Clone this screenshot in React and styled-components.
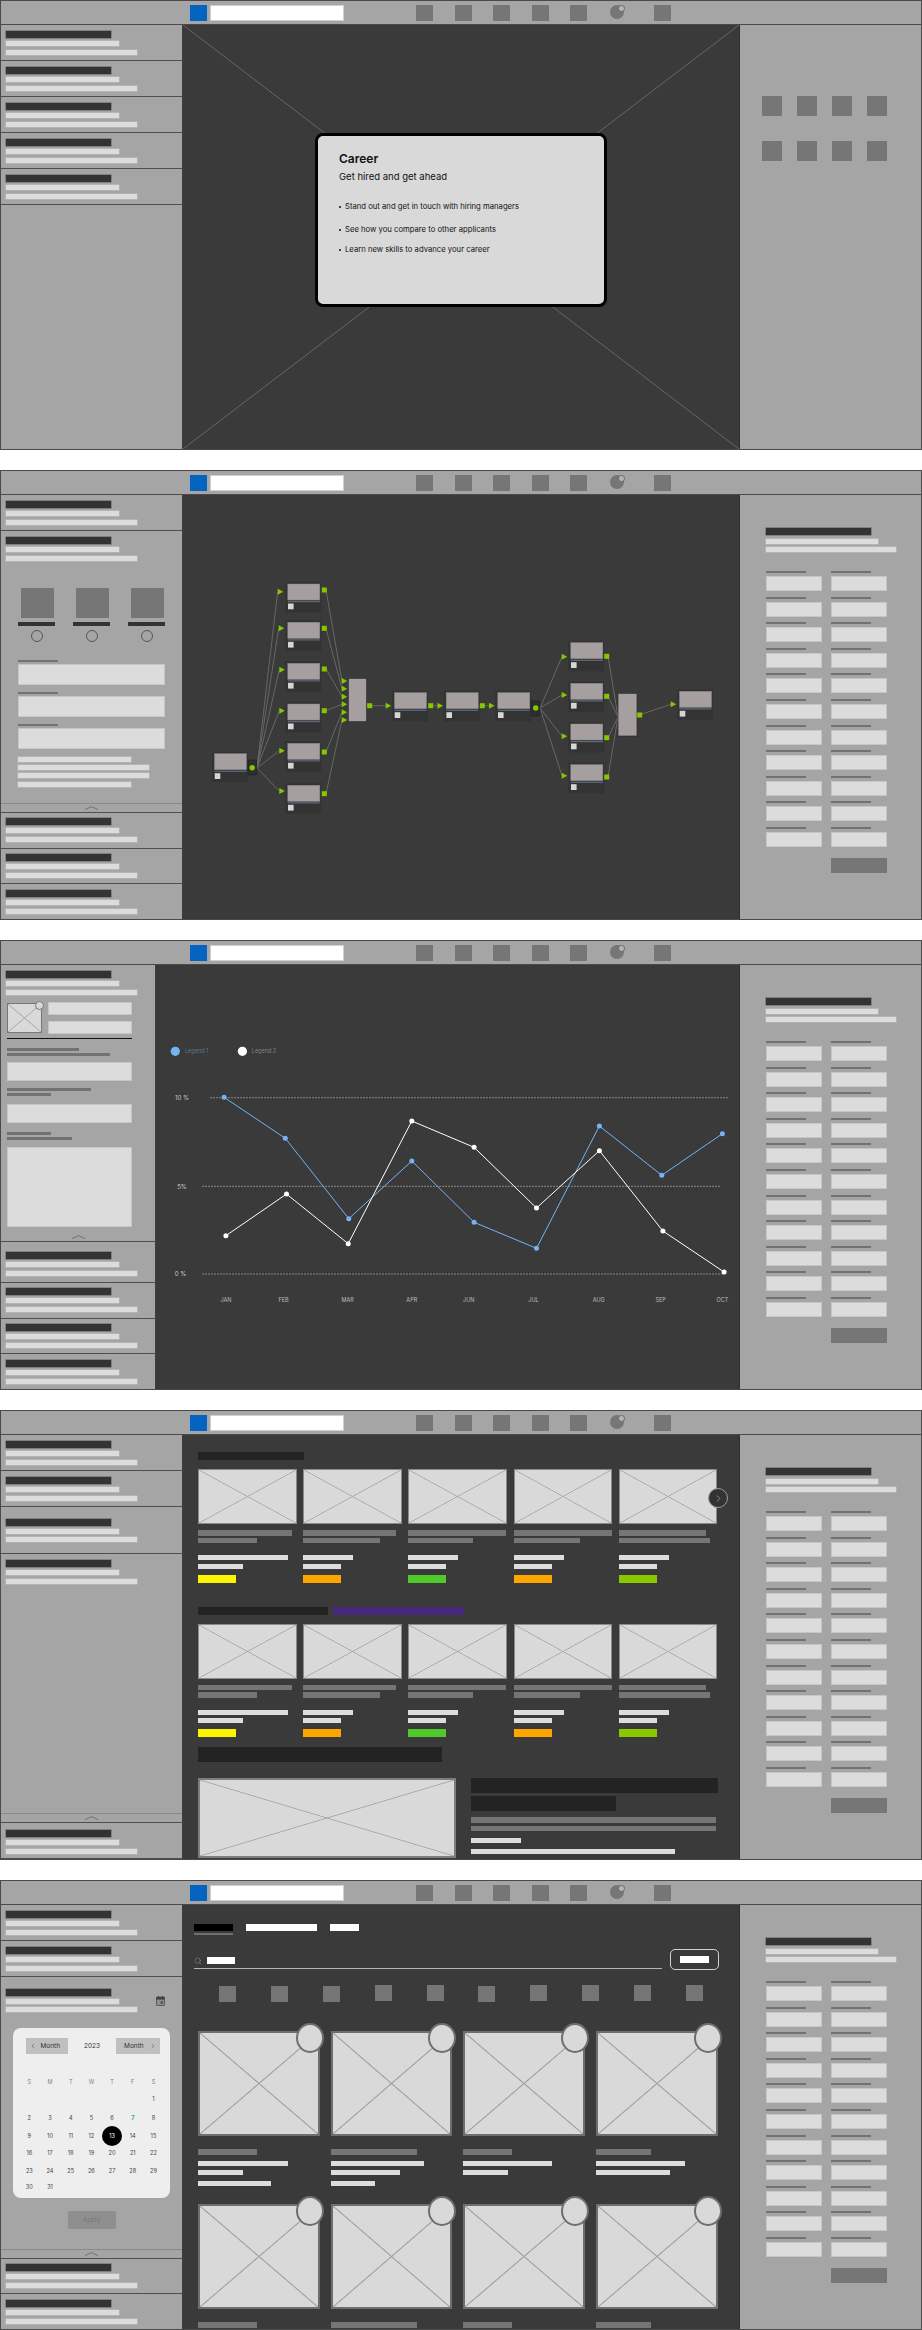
import React from 'react';
import styled, { createGlobalStyle, css } from 'styled-components';
import { ChevronLeft, ChevronRight, Search } from 'lucide-react';

const GlobalStyle = createGlobalStyle`
  html, body {
    margin: 0;
    padding: 0;
    background: #ffffff;
    font-family: 'Inter', 'Liberation Sans', sans-serif;
  }
  * { box-sizing: border-box; }
`;

const crossLines = (color, size = 0.6) => css`
  background-image:
    linear-gradient(to top right, transparent calc(50% - ${size}px), ${color} 50%, transparent calc(50% + ${size}px)),
    linear-gradient(to bottom right, transparent calc(50% - ${size}px), ${color} 50%, transparent calc(50% + ${size}px));
`;

const Frame = styled.section`
  height: 450px;
  width: 922px;
  margin-bottom: 20px;
  border: 1px solid #4a4a4a;
  overflow: hidden;
  background: #a5a5a5;
  &:last-child { margin-bottom: 0; }
`;

const Header = styled.header`
  height: 24px;
  display: flex;
  align-items: flex-start;
  padding: 4px 0 0 189px;
  border-bottom: 1px solid #4a4a4a;
`;

const Logo = styled.div`
  width: 17px;
  height: 16px;
  background: #0563c1;
  margin-right: 3px;
`;

const SearchInput = styled.div`
  width: 134px;
  height: 16px;
  background: #ffffff;
  border: 1px solid #d0d0d0;
  margin-right: 72px;
`;

const NavIcon = styled.div`
  width: 17px;
  height: 16px;
  background: #767676;
  margin-right: ${(p) => p.$gap ?? 21.5}px;
`;

const NavBubble = styled.div`
  position: relative;
  width: 14px;
  height: 14px;
  border-radius: 50%;
  background: #767676;
  margin-right: 29.5px;
  &::after {
    content: '';
    position: absolute;
    top: 0;
    right: -0.5px;
    width: 4.5px;
    height: 4.5px;
    border-radius: 50%;
    background: #b5b5b5;
    border: 0.8px solid #6a6a6a;
  }
`;

const Body = styled.div`
  display: flex;
  height: 424px;
`;

const Sidebar = styled.aside`
  width: ${(p) => p.$w ?? 182}px;
  flex-shrink: 0;
  height: 100%;
  overflow: hidden;
  border-right: 1px solid #3d3d3d;
  display: flex;
  flex-direction: column;
`;

const Main = styled.main`
  flex: 1;
  min-width: 0;
  height: 100%;
  overflow: hidden;
  background-color: #3a3a3a;
  padding-left: ${(p) => p.$pad ?? 0}px;
`;

const CrossMain = styled(Main)`
  ${crossLines('#6b6b6b', 0.7)}
  display: flex;
  justify-content: center;
  align-items: flex-start;
  padding-top: 108px;
`;

const Panel = styled.aside`
  width: 182px;
  flex-shrink: 0;
  height: 100%;
  border-left: 1px solid #2e2e2e;
  padding: 33px 0 0 26px;
`;

const TitleBar = styled.div`
  width: ${(p) => p.$w ?? 105}px;
  height: 7px;
  background: #333333;
  box-shadow: 0 0 0 0.5px #5c5c5c;
`;

const LightBar = styled.div`
  width: ${(p) => p.$w}px;
  height: 5px;
  margin-top: ${(p) => p.$mt ?? 0}px;
  background: #dcdcdc;
  box-shadow: 0 0 0 0.5px #c4c4c4;
`;

const SideItem = styled.div`
  flex-shrink: 0;
  height: ${(p) => p.$h ?? 36}px;
  padding: ${(p) => p.$top ?? 6}px 5px 0;
  border-bottom: 1px solid #4f4f4f;
  display: flex;
  flex-direction: column;
`;

const CollapseBar = styled.div`
  margin: auto -5px 0;
  height: 9px;
  flex-shrink: 0;
  display: flex;
  justify-content: center;
  align-items: center;
  border-top: ${(p) => (p.$plain ? 'none' : '1px solid #8a8a8a')};
`;

const Chevron = () => (
  <svg width="13" height="4" viewBox="0 0 13 4">
    <polyline points="0,3.6 6.5,0.6 13,3.6" fill="none" stroke="#666666" strokeWidth="0.8" />
  </svg>
);

const ItemHead = ({ gap = 4 }) => (
  <>
    <TitleBar />
    <LightBar $w={113} $mt={3} />
    <LightBar $w={130.5} $mt={gap} />
  </>
);

const Item = ({ top, h, gap }) => (
  <SideItem $top={top} $h={h}>
    <ItemHead gap={gap} />
  </SideItem>
);

const FormLabel = styled.div`
  width: ${(p) => p.$w ?? 40}px;
  height: ${(p) => p.$h ?? 2}px;
  margin-top: ${(p) => p.$mt ?? 0}px;
  background: #727272;
`;

const FieldBox = styled.div`
  width: ${(p) => p.$w}px;
  height: ${(p) => p.$h}px;
  margin-top: ${(p) => p.$mt ?? 0}px;
  background: #dcdcdc;
  border: 1px solid #c6c6c6;
`;

const FieldGrid = styled.div`
  margin-top: 19px;
  display: grid;
  grid-template-columns: 56px 56px;
  column-gap: 9px;
  row-gap: 5.6px;
`;

const SubmitBox = styled.div`
  grid-column: 2;
  width: 56px;
  height: 15px;
  margin-top: 5.4px;
  background: #767676;
`;

const RightForm = () => (
  <Panel>
    <TitleBar />
    <LightBar $w={112} $mt={4} />
    <LightBar $w={130} $mt={3} />
    <FieldGrid>
      {Array.from({ length: 22 }).map((_, i) => (
        <div key={i}>
          <FormLabel />
          <FieldBox $w={56} $h={15} $mt={3} />
        </div>
      ))}
      <SubmitBox />
    </FieldGrid>
  </Panel>
);

const TopBar = () => (
  <Header>
    <Logo />
    <SearchInput />
    <NavIcon />
    <NavIcon />
    <NavIcon />
    <NavIcon />
    <NavIcon $gap={23} />
    <NavBubble />
    <NavIcon />
  </Header>
);

/* frame 1 */
const Modal = styled.div`
  width: 292px;
  height: 174px;
  padding: 15px 21px 0;
  background: #d9d9d9;
  border: 3px solid #000000;
  border-radius: 8px;
  color: #111111;
`;

const ModalTitle = styled.h2`
  margin: 0;
  font-size: 12px;
  line-height: 16px;
  font-weight: 600;
`;

const ModalSub = styled.p`
  margin: 3px 0 0;
  font-size: 9.5px;
  line-height: 14px;
`;

const ModalList = styled.ul`
  list-style: none;
  margin: 0;
  padding: 0;
`;

const ModalPoint = styled.li`
  position: relative;
  margin-top: ${(p) => p.$mt}px;
  padding-left: 6px;
  font-size: 7.7px;
  line-height: 10px;
  white-space: nowrap;
  &::before {
    content: '';
    position: absolute;
    left: 0;
    top: 4px;
    width: 2px;
    height: 2px;
    border-radius: 50%;
    background: #111111;
  }
`;

const SquareGrid = styled.div`
  display: grid;
  grid-template-columns: repeat(4, 20px);
  column-gap: 15px;
  row-gap: 25px;
  margin: 38px 0 0 -4px;
`;

const Square = styled.div`
  height: 20px;
  background: #767676;
`;

/* frame 2 */
const OptionRow = styled.div`
  margin: 27px 0 0 12px;
  display: grid;
  grid-template-columns: repeat(3, 37px);
  column-gap: 18px;
`;

const Option = styled.div`
  display: flex;
  flex-direction: column;
  align-items: center;
`;

const OptionImage = styled.div`
  width: 33px;
  height: 30px;
  margin-left: 1px;
  background: #767676;
`;

const OptionName = styled.div`
  width: 37px;
  height: 4px;
  margin-top: 4px;
  background: #333333;
`;

const Radio = styled.div`
  width: 12px;
  height: 12px;
  margin-top: 4px;
  border-radius: 50%;
  border: 1px solid #555555;
`;

const IndentBlock = styled.div`
  margin-left: 12px;
`;

const nodesA = [582, 620.3, 661.3, 702, 741.3, 783.3];
const nodesB = [640.7, 681.3, 722, 762.7];

const Node = ({ x, y }) => (
  <g>
    <rect x={x} y={y} width="36" height="30.5" rx="1.5" fill="#333333" />
    <rect x={x + 2.5} y={y + 2} width="32" height="16" fill="#a5a09f" stroke="#8a8685" strokeWidth="0.5" />
    <rect x={x + 2.5} y={y + 19} width="32" height="1.2" fill="#5e6b7d" />
    <rect x={x + 2.7} y={y + 21.5} width="5.6" height="5.8" fill="#d6d6d6" />
  </g>
);

const Port = ({ x, y }) => <rect x={x - 2.5} y={y - 2.5} width="5" height="5" fill="#86c800" />;
const Arrow = ({ x, y }) => <polygon points={`${x},${y - 3} ${x + 5.5},${y} ${x},${y + 3}`} fill="#86c800" />;

const Splitter = ({ x, y, cx, cy }) => (
  <g>
    <rect x={x} y={y} width="8.6" height="15" rx="1" fill="#2e2e2e" stroke="#1e1e1e" strokeWidth="0.6" />
    <circle cx={cx} cy={cy} r="2.7" fill="#86c800" />
  </g>
);

const Link = ({ a, b }) => <line x1={a[0]} y1={a[1]} x2={b[0]} y2={b[1]} stroke="#6c6c6c" strokeWidth="0.9" />;

const arrowsA = [[277.7, 591.7], [278.7, 628.3], [279.3, 669.7], [279.3, 710.7], [279.3, 750.7], [279.3, 791]];
const portsA = [590, 628.3, 669, 710.7, 752, 793.7];
const mergeIn = [681, 688.7, 696.7, 704.3, 712.3, 720];
const arrowsB = [656.7, 695, 736.3, 775.7];
const portsB = [656.3, 696.3, 737.7, 777];

const Graph = () => (
  <svg width="555" height="424" viewBox="183 495 555 424" style={{ display: 'block' }}>
    {arrowsA.map(([x, y]) => <Link key={y} a={[257, 768]} b={[x, y]} />)}
    {portsA.map((y, i) => <Link key={y} a={[326, y]} b={[342, mergeIn[i]]} />)}
    {arrowsB.map((y) => <Link key={y} a={[540, 708]} b={[562, y]} />)}
    {portsB.map((y) => <Link key={y} a={[608, y]} b={[618, 717]} />)}
    <Link a={[372, 705.7]} b={[386, 705.7]} />
    <Link a={[433, 705.7]} b={[438, 705.7]} />
    <Link a={[485, 705.7]} b={[489, 705.7]} />
    <Link a={[642, 714]} b={[671, 704.3]} />
    <Node x={212} y={751.7} />
    <Splitter x={248} y={760} cx={252.2} cy={767.7} />
    {nodesA.map((y) => <Node key={y} x={285.3} y={y} />)}
    {arrowsA.map(([x, y]) => <Arrow key={y} x={x} y={y} />)}
    {portsA.map((y) => <Port key={y} x={324.3} y={y} />)}
    {mergeIn.map((y) => <Arrow key={y} x={341.7} y={y} />)}
    <rect x="348.3" y="678.3" width="18.4" height="43.4" fill="#a5a09f" stroke="#2a2a2a" strokeWidth="0.7" />
    <Port x={369.7} y={705.7} />
    <Arrow x={385.7} y={705.7} />
    <Node x={392} y={690.7} />
    <Port x={430.7} y={705.7} />
    <Arrow x={437.5} y={705.7} />
    <Node x={443.7} y={690.7} />
    <Port x={482.3} y={705.7} />
    <Arrow x={489} y={705.7} />
    <Node x={495.3} y={690.7} />
    <Splitter x={531.3} y={701} cx={535.7} cy={708} />
    {nodesB.map((y) => <Node key={y} x={568.3} y={y} />)}
    {arrowsB.map((y) => <Arrow key={y} x={561.7} y={y} />)}
    {portsB.map((y) => <Port key={y} x={606.7} y={y} />)}
    <rect x="618" y="693.3" width="19" height="42.7" fill="#a5a09f" stroke="#2a2a2a" strokeWidth="0.7" />
    <Port x={639.7} y={715} />
    <Arrow x={670.7} y={704.3} />
    <Node x={677} y={689.3} />
  </svg>
);

/* frame 3 */
const ProfileRow = styled.div`
  margin: 7px 0 0 1px;
  display: flex;
  gap: 6px;
`;

const Thumb = styled.div`
  position: relative;
  flex-shrink: 0;
  width: ${(p) => p.$w ?? '100%'};
  height: ${(p) => p.$h}px;
  margin-top: ${(p) => p.$mt ?? 0}px;
  background-color: #d9d9d9;
  border: ${(p) => p.$border ?? 1}px solid ${(p) => p.$edge ?? '#777777'};
  ${(p) => crossLines(p.$line ?? '#a3a3a3', p.$stroke ?? 0.7)}
`;

const ProfileBubble = styled.div`
  position: absolute;
  top: -3px;
  right: -3px;
  width: 9px;
  height: 9px;
  border-radius: 50%;
  background: #d9d9d9;
  border: 1px solid #777777;
`;

const ProfileFields = styled.div`
  display: flex;
  flex-direction: column;
  gap: 6px;
`;

const Rule = styled.div`
  width: 125px;
  height: 1px;
  margin: 4px 0 0 1px;
  background: #111111;
`;

const Indent = styled.div`
  margin-left: ${(p) => p.$x ?? 1}px;
`;

const blue = [[224.1, 1097.3], [285.3, 1138.3], [348.8, 1218.7], [411.8, 1161], [474.1, 1222.3], [536.5, 1248.3], [599.4, 1126], [661.8, 1175.3], [722.4, 1133.7]];
const white = [[225.9, 1235.7], [286.5, 1194], [348.2, 1243.7], [411.8, 1121], [474.1, 1147.3], [536.5, 1208], [599.4, 1150.7], [662.9, 1231], [724.1, 1272]];
const months = [['JAN', 226], ['FEB', 283.5], ['MAR', 347.6], ['APR', 411.8], ['JUN', 468.8], ['JUL', 533.5], ['AUG', 598.8], ['SEP', 660.6], ['OCT', 722.4]];
const gridLines = [['10 %', 182, 1097.7, 210, 729], ['5%', 182, 1186.3, 202, 720], ['0 %', 180.5, 1274, 202, 725]];

const ChartText = styled.text`
  font-family: 'Inter', 'Liberation Sans', sans-serif;
  font-size: ${(p) => p.$size ?? 6}px;
  fill: ${(p) => p.$fill ?? '#bdbdbd'};
  text-anchor: ${(p) => p.$anchor ?? 'middle'};
`;

const Series = ({ points, color }) => (
  <g>
    <polyline points={points.map((p) => p.join(',')).join(' ')} fill="none" stroke={color} strokeWidth="1" />
    {points.map(([x, y]) => <circle key={x} cx={x} cy={y} r="2.5" fill={color} />)}
  </g>
);

const Chart = () => (
  <svg width="583" height="424" viewBox="156 965 583 424" style={{ display: 'block' }}>
    <circle cx="175.3" cy="1051.3" r="4.6" fill="#74b4f5" />
    <ChartText x="185" y="1052.5" $size={5.5} $anchor="start" $fill="#5f7488">Legend 1</ChartText>
    <circle cx="242.4" cy="1051.3" r="4.6" fill="#ffffff" />
    <ChartText x="251.8" y="1052.5" $size={5.5} $anchor="start" $fill="#808080">Legend 2</ChartText>
    {gridLines.map(([label, tx, y, x1, x2]) => (
      <g key={label}>
        <line x1={x1} x2={x2} y1={y} y2={y} stroke="#9c9c9c" strokeWidth="0.8" strokeDasharray="2 1" />
        <ChartText x={tx} y={y + 2.2} $fill="#cfcfcf">{label}</ChartText>
      </g>
    ))}
    <Series points={blue} color="#74b4f5" />
    <Series points={white} color="#ffffff" />
    {months.map(([m, x]) => <ChartText key={m} x={x} y="1301.5" $size={5.5}>{m}</ChartText>)}
  </svg>
);

/* frame 4 */
const HeadingRow = styled.div`
  display: flex;
  gap: 5px;
  margin-top: ${(p) => p.$mt}px;
`;

const Heading = styled.div`
  width: ${(p) => p.$w}px;
  height: ${(p) => p.$h ?? 8}px;
  margin-top: ${(p) => p.$mt ?? 0}px;
  background: ${(p) => p.$color ?? '#232323'};
`;

const ProductGrid = styled.div`
  position: relative;
  margin-top: 9px;
  display: grid;
  grid-template-columns: repeat(5, 98.5px);
  column-gap: 6.7px;
`;

const GreyBar = styled.div`
  width: ${(p) => p.$w}px;
  height: ${(p) => p.$h ?? 5.5}px;
  margin-top: ${(p) => p.$mt}px;
  background: #757575;
`;

const WhiteBar = styled.div`
  width: ${(p) => p.$w}px;
  height: 5px;
  margin-top: ${(p) => p.$mt}px;
  background: #dddddd;
`;

const Tag = styled.div`
  width: 38px;
  height: 8px;
  margin-top: 6px;
  background: ${(p) => p.$color};
`;

const NextButton = styled.div`
  position: absolute;
  left: 510px;
  top: 19px;
  width: 20px;
  height: 20px;
  display: flex;
  align-items: center;
  justify-content: center;
  border-radius: 50%;
  background: #333333;
  border: 1px solid #9a9a9a;
  color: #d0d0d0;
`;

const Feature = styled.div`
  margin-top: 16px;
  display: grid;
  grid-template-columns: 258px 247px;
  column-gap: 15px;
`;

const products = [
  { g1: 94, g2: 59, w1: 90, w2: 45, tag: '#fdf500' },
  { g1: 93, g2: 77, w1: 50, w2: 38, tag: '#ffa500' },
  { g1: 98, g2: 65, w1: 50, w2: 38, tag: '#52c92a' },
  { g1: 98, g2: 66, w1: 50, w2: 38, tag: '#ffa500' },
  { g1: 87, g2: 91, w1: 50, w2: 38, tag: '#88c800' },
];

const Products = ({ next }) => (
  <ProductGrid>
    {products.map((p, i) => (
      <div key={i}>
        <Thumb $h={55} $edge="#8a8a8a" />
        <GreyBar $w={p.g1} $mt={6} />
        <GreyBar $w={p.g2} $mt={2} />
        <WhiteBar $w={p.w1} $mt={12} />
        <WhiteBar $w={p.w2} $mt={3.5} />
        <Tag $color={p.tag} />
      </div>
    ))}
    {next && (
      <NextButton>
        <ChevronRight size={11} strokeWidth={1.2} />
      </NextButton>
    )}
  </ProductGrid>
);

/* frame 5 */
const HeadWithIcon = styled.div`
  display: flex;
  justify-content: space-between;
  align-items: center;
  padding-right: 12px;
`;

const CalendarCard = styled.div`
  width: 156.5px;
  height: 170px;
  margin: 16px 0 0 7.3px;
  padding: 10px 9.7px 0 12.7px;
  flex-shrink: 0;
  background: #eeeeee;
  border-radius: 8px;
  color: #333333;
`;

const CalendarHead = styled.div`
  display: flex;
  align-items: center;
  justify-content: space-between;
`;

const MonthButton = styled.div`
  width: ${(p) => p.$w}px;
  height: 15.5px;
  display: flex;
  align-items: center;
  justify-content: space-between;
  padding: 0 3px;
  background: #bfbfbf;
  font-size: 6.5px;
`;

const Year = styled.span`
  font-size: 6.5px;
`;

const DayGrid = styled.div`
  margin: 19.5px 0 0 -7px;
  display: grid;
  grid-template-columns: repeat(7, 20.7px);
  grid-template-rows: 17px 18.4px 20.2px 15.2px 19.4px 16px 15.2px;
`;

const Day = styled.div`
  justify-self: center;
  align-self: center;
  width: 20px;
  height: 20px;
  margin: -5px 0;
  display: flex;
  align-items: center;
  justify-content: center;
  border-radius: 50%;
  font-size: 5.6px;
  color: ${(p) => (p.$head ? '#808080' : p.$teal ? '#25b29b' : '#444444')};
  font-weight: ${(p) => (p.$teal ? 700 : 400)};
  ${(p) => p.$selected && 'background: #000000; color: #ffffff;'}
`;

const ApplyButton = styled.div`
  align-self: center;
  width: 48px;
  height: 18px;
  margin-top: 13px;
  flex-shrink: 0;
  display: flex;
  align-items: center;
  justify-content: center;
  background: #8f8f8f;
  color: #777777;
  font-size: 6.5px;
`;

const Tabs = styled.div`
  height: 11px;
  margin-top: 19px;
  display: flex;
  gap: 12.8px;
`;

const Tab = styled.div`
  position: relative;
  width: ${(p) => p.$w}px;
  height: 7px;
  background: ${(p) => (p.$active ? '#000000' : '#ffffff')};
  ${(p) =>
    p.$active &&
    `&::after {
      content: '';
      position: absolute;
      left: 0;
      right: 0;
      top: 8.5px;
      height: 2px;
      background: #6e6e6e;
    }`}
`;

const SearchRow = styled.div`
  margin-top: 14px;
  display: flex;
  align-items: flex-start;
`;

const SearchField = styled.div`
  width: 467.5px;
  height: 20px;
  padding-top: 8px;
  display: flex;
  align-items: flex-start;
  gap: 5px;
  color: #a8a8a8;
  border-bottom: 1px solid #b5b5b5;
`;

const SearchChip = styled.div`
  width: ${(p) => p.$w}px;
  height: 7px;
  background: #ffffff;
`;

const OutlineButton = styled.div`
  width: 49px;
  height: 21px;
  margin-left: 8.6px;
  display: flex;
  align-items: center;
  justify-content: center;
  border: 1px solid #d0d0d0;
  border-radius: 5px;
`;

const IconRow = styled.div`
  margin: 16px 0 0 25px;
  display: grid;
  grid-template-columns: repeat(10, 17px);
  column-gap: 34.9px;
  height: 16px;
`;

const RowIcon = styled.div`
  height: 16px;
  margin-top: ${(p) => (p.$up ? -1 : 0)}px;
  background: #757575;
`;

const GalleryGrid = styled.div`
  margin: 29.3px 0 0 4px;
  display: grid;
  grid-template-columns: repeat(4, 121.5px);
  column-gap: 11.2px;
  grid-auto-rows: 172.7px;
`;

const FavBubble = styled.div`
  position: absolute;
  top: -10px;
  right: -6px;
  width: 28px;
  height: 30px;
  border-radius: 50%;
  background: #d9d9d9;
  border: 2px solid #6e6e6e;
`;

const gallery = [
  { g: 59, w1: 90, w2: 45, w3: 73 },
  { g: 86, w1: 93, w2: 69, w3: 44 },
  { g: 49, w1: 88.5, w2: 44.5 },
  { g: 55, w1: 88.5, w2: 74 },
];

const monthDays = [
  ['', '', '', '', '', '', '1'],
  ['2', '3', '4', '5', '6', '7', '8'],
  ['9', '10', '11', '12', '13', '14', '15'],
  ['16', '17', '18', '19', '20', '21', '22'],
  ['23', '24', '25', '26', '27', '28', '29'],
  ['30', '31', '', '', '', '', ''],
];

const DatePicker = () => (
  <CalendarCard>
    <CalendarHead>
      <MonthButton $w={42}>
        <ChevronLeft size={8} strokeWidth={1.2} />
        <span style={{ marginRight: 5 }}>Month</span>
      </MonthButton>
      <Year>2023</Year>
      <MonthButton $w={44}>
        <span style={{ marginLeft: 5 }}>Month</span>
        <ChevronRight size={8} strokeWidth={1.2} />
      </MonthButton>
    </CalendarHead>
    <DayGrid>
      {['S', 'M', 'T', 'W', 'T', 'F', 'S'].map((d, i) => <Day key={i} $head>{d}</Day>)}
      {monthDays.flat().map((d, i) => (
        <Day key={`d${i}`} $teal={d === '7'} $selected={d === '13'}>{d}</Day>
      ))}
    </DayGrid>
  </CalendarCard>
);

const CalendarIcon = () => (
  <svg width="9" height="10" viewBox="0 0 9 10">
    <rect x="0.4" y="1" width="8.2" height="8.6" rx="0.8" fill="#8f8f8f" stroke="#444444" strokeWidth="0.8" />
    <rect x="0.4" y="1" width="8.2" height="2.6" fill="#444444" />
    <rect x="2" y="0" width="1" height="1.6" fill="#444444" />
    <rect x="6" y="0" width="1" height="1.6" fill="#444444" />
    <rect x="4.6" y="5.4" width="2.2" height="2.2" fill="#444444" />
  </svg>
);

export default function App() {
  return (
    <>
      <GlobalStyle />

      <Frame>
        <TopBar />
        <Body>
          <Sidebar>
            <Item />
            <Item />
            <Item />
            <Item />
            <Item />
          </Sidebar>
          <CrossMain>
            <Modal>
              <ModalTitle>Career</ModalTitle>
              <ModalSub>Get hired and get ahead</ModalSub>
              <ModalList>
                <ModalPoint $mt={18}>Stand out and get in touch with hiring managers</ModalPoint>
                <ModalPoint $mt={13}>See how you compare to other applicants</ModalPoint>
                <ModalPoint $mt={10}>Learn new skills to advance your career</ModalPoint>
              </ModalList>
            </Modal>
          </CrossMain>
          <Panel>
            <SquareGrid>
              {Array.from({ length: 8 }).map((_, i) => <Square key={i} />)}
            </SquareGrid>
          </Panel>
        </Body>
      </Frame>

      <Frame>
        <TopBar />
        <Body>
          <Sidebar>
            <Item />
            <SideItem $h={282}>
              <ItemHead />
              <OptionRow>
                {[0, 1, 2].map((i) => (
                  <Option key={i}>
                    <OptionImage />
                    <OptionName />
                    <Radio />
                  </Option>
                ))}
              </OptionRow>
              <IndentBlock>
                <FormLabel $mt={18} />
                <FieldBox $w={147} $h={21} $mt={2} />
                <FormLabel $mt={7} />
                <FieldBox $w={147} $h={21} $mt={2} />
                <FormLabel $mt={7} />
                <FieldBox $w={147} $h={21} $mt={2} />
                <LightBar $w={113} $mt={8} />
                <LightBar $w={131} $mt={3} />
                <LightBar $w={131} $mt={3} />
                <LightBar $w={113} $mt={4} />
              </IndentBlock>
              <CollapseBar><Chevron /></CollapseBar>
            </SideItem>
            <Item top={5} />
            <Item top={5} h={35} />
            <Item />
          </Sidebar>
          <Main><Graph /></Main>
          <RightForm />
        </Body>
      </Frame>

      <Frame>
        <TopBar />
        <Body>
          <Sidebar $w={155}>
            <SideItem $h={277}>
              <ItemHead />
              <ProfileRow>
                <Thumb $w="34.7px" $h={30} $mt={1}>
                  <ProfileBubble />
                </Thumb>
                <ProfileFields>
                  <FieldBox $w={84} $h={13} />
                  <FieldBox $w={84} $h={13} />
                </ProfileFields>
              </ProfileRow>
              <Rule />
              <Indent>
                <FormLabel $w={72} $h={3} $mt={9} />
                <FormLabel $w={103} $h={3} $mt={2} />
                <FieldBox $w={125} $h={19} $mt={6} />
                <FormLabel $w={84} $h={3} $mt={7} />
                <FormLabel $w={44} $h={3} $mt={2} />
                <FieldBox $w={125} $h={19} $mt={8} />
                <FormLabel $w={44} $h={3} $mt={9} />
                <FormLabel $w={65} $h={3} $mt={2} />
                <FieldBox $w={125} $h={80} $mt={7} />
              </Indent>
              <CollapseBar $plain><Chevron /></CollapseBar>
            </SideItem>
            <Item top={10} h={41} />
            <Item top={5} />
            <Item top={5} h={35} />
            <Item />
          </Sidebar>
          <Main><Chart /></Main>
          <RightForm />
        </Body>
      </Frame>

      <Frame>
        <TopBar />
        <Body>
          <Sidebar>
            <Item />
            <Item />
            <Item top={12} h={47} gap={3} />
            <SideItem $h={269}>
              <ItemHead />
              <CollapseBar><Chevron /></CollapseBar>
            </SideItem>
            <Item top={7} />
          </Sidebar>
          <Main $pad={15}>
            <HeadingRow $mt={17}>
              <Heading $w={106} />
            </HeadingRow>
            <Products next />
            <HeadingRow $mt={24}>
              <Heading $w={130} />
              <Heading $w={131} $color="#482878" />
            </HeadingRow>
            <Products />
            <Heading $w={244} $h={15} $mt={10} />
            <Feature>
              <Thumb $h={80} $border={2} $edge="#7e7e7e" $line="#a3a3a3" $stroke={0.8} />
              <div>
                <Heading $w={247} $h={15} />
                <Heading $w={145} $h={15} $mt={3} />
                <GreyBar $w={245} $mt={6} />
                <GreyBar $w={245} $mt={3} />
                <WhiteBar $w={50} $mt={7} />
                <WhiteBar $w={204} $mt={6} />
              </div>
            </Feature>
          </Main>
          <RightForm />
        </Body>
      </Frame>

      <Frame>
        <TopBar />
        <Body>
          <Sidebar>
            <Item />
            <Item />
            <SideItem $top={12} $h={282}>
              <HeadWithIcon>
                <div><ItemHead gap={3} /></div>
                <CalendarIcon />
              </HeadWithIcon>
              <DatePicker />
              <ApplyButton>Apply</ApplyButton>
              <CollapseBar><Chevron /></CollapseBar>
            </SideItem>
            <Item top={5} h={35} />
            <Item />
          </Sidebar>
          <Main $pad={11}>
            <Tabs>
              <Tab $w={39} $active />
              <Tab $w={71.6} />
              <Tab $w={28.4} />
            </Tabs>
            <SearchRow>
              <SearchField>
                <Search size={8} strokeWidth={1.2} />
                <SearchChip $w={28.4} />
              </SearchField>
              <OutlineButton>
                <SearchChip $w={28.4} />
              </OutlineButton>
            </SearchRow>
            <IconRow>
              {[0, 0, 0, 1, 1, 0, 1, 1, 1, 1].map((up, i) => <RowIcon key={i} $up={up} />)}
            </IconRow>
            <GalleryGrid>
              {[...gallery, ...gallery].map((c, i) => (
                <div key={i}>
                  <Thumb $h={105} $border={2} $edge="#6e6e6e" $line="#9a9a9a" $stroke={1} >
                    <FavBubble />
                  </Thumb>
                  <GreyBar $w={c.g} $h={6} $mt={13} />
                  <WhiteBar $w={c.w1} $mt={6} />
                  <WhiteBar $w={c.w2} $mt={3.5} />
                  {c.w3 && <WhiteBar $w={c.w3} $mt={6} />}
                </div>
              ))}
            </GalleryGrid>
          </Main>
          <RightForm />
        </Body>
      </Frame>
    </>
  );
}
